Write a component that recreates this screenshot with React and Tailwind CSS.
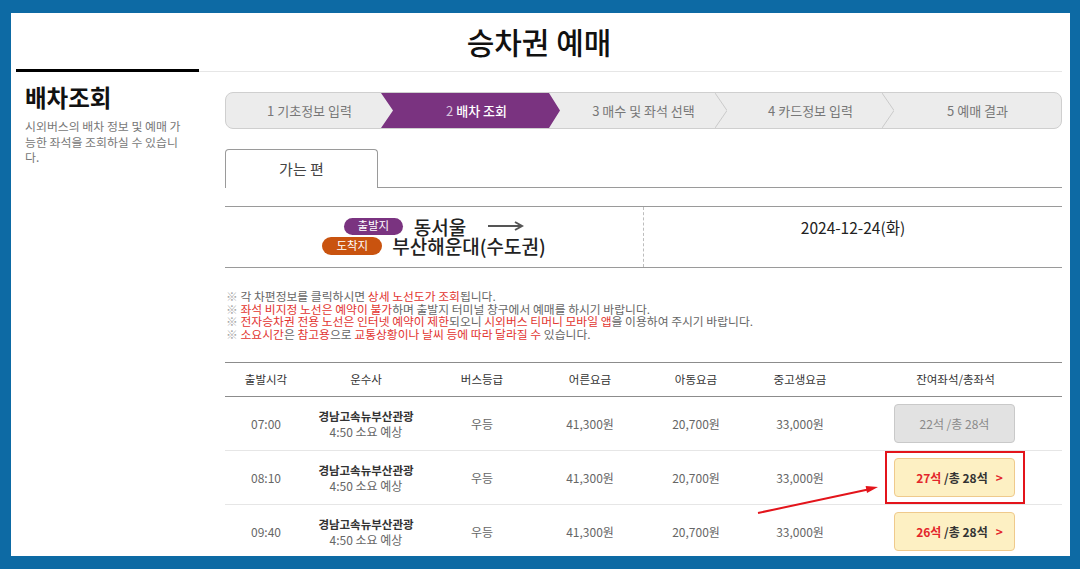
import { Fragment } from 'react'

const font = { fontFamily: '"Noto Sans CJK KR", "Noto Sans", sans-serif' }

const steps = [
  { no: '1', label: '기초정보 입력' },
  { no: '2', label: '배차 조회', active: true },
  { no: '3', label: '매수 및 좌석 선택' },
  { no: '4', label: '카드정보 입력' },
  { no: '5', label: '예매 결과' },
]

const rows = [
  { time: '07:00', left: '22', state: 'off' },
  { time: '08:10', left: '27', state: 'on', marked: true },
  { time: '09:40', left: '26', state: 'on' },
]

function Chevron() {
  return (
    <svg className="absolute right-0 top-0 h-full w-[12px]" viewBox="0 0 12 36" preserveAspectRatio="none">
      <polyline points="0,0 12,18 0,36" fill="none" stroke="#c9c9c9" strokeWidth="1" />
    </svg>
  )
}

function Stepper() {
  return (
    <div className="relative flex h-[37px] overflow-hidden rounded-[8px] border border-[#cfcfcf] bg-[#ececec]">
      {steps.map((s, i) => (
        <div key={s.no} className="relative flex flex-1 items-center justify-center">
          {s.active && (
            <div className="absolute bottom-0 left-[-12px] right-0 top-0 bg-[#7a3380] [clip-path:polygon(0_0,calc(100%_-_11px)_0,100%_50%,calc(100%_-_11px)_100%,0_100%,12px_50%)]" />
          )}
          {!s.active && i > 1 && i < 4 && <Chevron />}
          <span className={`relative text-[13px] ${s.active ? 'text-white' : 'text-[#777]'}`}>
            <span className={s.active ? 'text-[#d9c3dd]' : ''}>{s.no}</span>{' '}
            <span className={s.active ? 'font-medium' : ''}>{s.label}</span>
          </span>
        </div>
      ))}
    </div>
  )
}

function Red({ children }) {
  return <span className="text-[#e2342f]">{children}</span>
}

function SeatButton({ left, state }) {
  if (state === 'off') {
    return (
      <div className="flex h-[39px] w-[121px] items-center justify-center rounded-[4px] border border-[#c9c9c9] bg-[#e2e2e2] text-[12px] text-[#8a8a8a]">
        {left}석 /총 28석
      </div>
    )
  }
  return (
    <div className="flex h-[39px] w-[121px] items-center justify-center gap-[8px] rounded-[4px] border border-[#efca8c] bg-[#fdf0c3] pl-[10px] text-[12px] font-bold">
      <span>
        <span className="text-[#e3262b]">{left}석</span>
        <span className="text-[#333]"> /총 28석</span>
      </span>
      <span className="text-[#e3262b]">&gt;</span>
    </div>
  )
}

export default function App() {
  return (
    <div className="h-[569px] w-[1080px] bg-[#0d6aa4] pb-[13px] pl-[11px] pr-[10px] pt-[13px]" style={font}>
      <div className="h-full overflow-hidden bg-white pl-[5px] pr-[8px]">
        {/* Title */}
        <div className="flex h-[56px] items-center justify-center">
          <h1 className="text-[30px] font-medium text-[#111]">승차권 예매</h1>
        </div>
        <div className="flex items-end">
          <div className="h-[3px] w-[183px] bg-black" />
          <div className="h-px flex-1 bg-[#e6e6e6]" />
        </div>

        <div className="flex gap-[26px]">
          {/* Sidebar */}
          <div className="w-[183px] shrink-0 pl-[9px] pt-[11px]">
            <h2 className="text-[23.5px] font-bold leading-[29px] text-[#111]">배차조회</h2>
            <p className="mt-[6px] whitespace-nowrap text-[11.9px] leading-[15.5px] text-[#777]">
              시외버스의 배차 정보 및 예매 가<br />
              능한 좌석을 조회하실 수 있습니<br />
              다.
            </p>
          </div>

          {/* Main */}
          <div className="flex-1 pt-[20px]">
            <Stepper />

            {/* Tab */}
            <div className="mt-[20px] flex">
              <div className="flex h-[39px] w-[153px] items-center justify-center rounded-t-[4px] border border-b-0 border-[#9a9a9a] text-[15px] text-[#444]">
                가는 편
              </div>
              <div className="flex-1 border-b border-[#9a9a9a]" />
            </div>

            {/* Route */}
            <div className="mt-[18px] flex h-[62px] border-y border-[#9a9a9a]">
              <div className="flex w-[419px] flex-col items-center justify-center border-r border-dashed border-[#bdbdbd] pb-[2px]">
                <div className="flex items-center">
                  <span className="flex h-[17px] w-[59px] items-center justify-center rounded-full bg-[#7a3380] text-[11.5px] text-white">출발지</span>
                  <span className="ml-[11px] text-[19px] font-medium leading-[19px] text-[#222]">동서울</span>
                  <svg className="ml-[22px]" width="36" height="10" viewBox="0 0 36 10">
                    <line x1="0" y1="5" x2="34" y2="5" stroke="#555" strokeWidth="2" />
                    <polyline points="27,1 34,5 27,9" fill="none" stroke="#555" strokeWidth="2" />
                  </svg>
                </div>
                <div className="flex items-center">
                  <span className="flex h-[18px] w-[60px] items-center justify-center rounded-full bg-[#c9530f] text-[11.5px] text-white">도착지</span>
                  <span className="ml-[10px] text-[19px] font-medium leading-[20px] text-[#222]">부산해운대(수도권)</span>
                </div>
              </div>
              <div className="flex flex-1 justify-center pt-[9px]">
                <span className="text-[15.5px] text-[#222]">2024-12-24(화)</span>
              </div>
            </div>

            {/* Notes */}
            <div className="mt-[22px] pl-px text-[11.8px] leading-[12.5px] text-[#666]">
              <p><span className="text-[#aaa]">※</span> 각 차편정보를 클릭하시면 <Red>상세 노선도가 조회</Red>됩니다.</p>
              <p><span className="text-[#aaa]">※</span> <Red>좌석 비지정 노선은 예약이 불가</Red>하며 출발지 터미널 창구에서 예매를 하시기 바랍니다.</p>
              <p><span className="text-[#aaa]">※</span> <Red>전자승차권 전용 노선은 인터넷 예약이 제한</Red>되오니 <Red>시외버스 티머니 모바일 앱</Red>을 이용하여 주시기 바랍니다.</p>
              <p><span className="text-[#aaa]">※</span> <Red>소요시간</Red>은 <Red>참고용</Red>으로 <Red>교통상황이나 날씨 등에 따라 달라질 수</Red> 있습니다.</p>
            </div>

            {/* Table */}
            <div className="relative mt-[22px]">
              <div className="grid grid-cols-[82px_118px_114px_102px_110px_98px_1fr] text-center">
                {['출발시각', '운수사', '버스등급', '어른요금', '아동요금', '중고생요금', '잔여좌석/총좌석'].map(h => (
                  <div key={h} className="flex h-[35px] items-center justify-center border-y border-y-[#8c8c8c] text-[11.5px] text-[#333]">
                    {h}
                  </div>
                ))}
                {rows.map(r => (
                  <Fragment key={r.time}>
                    <div className="flex h-[54px] items-center justify-center border-b border-[#e6e6e6] text-[12px] text-[#666]">{r.time}</div>
                    <div className="flex h-[54px] flex-col items-center justify-center border-b border-[#e6e6e6] leading-[15px]">
                      <span className="text-[11.5px] font-bold text-[#333]">경남고속뉴부산관광</span>
                      <span className="text-[12px] text-[#666]">4:50 소요 예상</span>
                    </div>
                    <div className="flex h-[54px] items-center justify-center border-b border-[#e6e6e6] text-[12px] text-[#666]">우등</div>
                    <div className="flex h-[54px] items-center justify-center border-b border-[#e6e6e6] text-[12px] text-[#666]">41,300원</div>
                    <div className="flex h-[54px] items-center justify-center border-b border-[#e6e6e6] text-[12px] text-[#666]">20,700원</div>
                    <div className="flex h-[54px] items-center justify-center border-b border-[#e6e6e6] text-[12px] text-[#666]">33,000원</div>
                    <div className="flex h-[54px] items-center justify-center border-b border-[#e6e6e6] pr-[2px]">
                      <div className="relative">
                        <SeatButton left={r.left} state={r.state} />
                        {r.marked && (
                          <div className="absolute bottom-[-7px] left-[-9px] right-[-10px] top-[-7px] border-2 border-[#e3141b]" />
                        )}
                      </div>
                    </div>
                  </Fragment>
                ))}
              </div>
              <svg className="pointer-events-none absolute left-0 top-0 overflow-visible" width="837" height="200">
                <line x1="533" y1="151" x2="643" y2="127.5" stroke="#e3141b" strokeWidth="2" />
                <polygon points="653,125 642,131 640.6,124" fill="#e3141b" />
              </svg>
            </div>
          </div>
        </div>
      </div>
    </div>
  )
}
